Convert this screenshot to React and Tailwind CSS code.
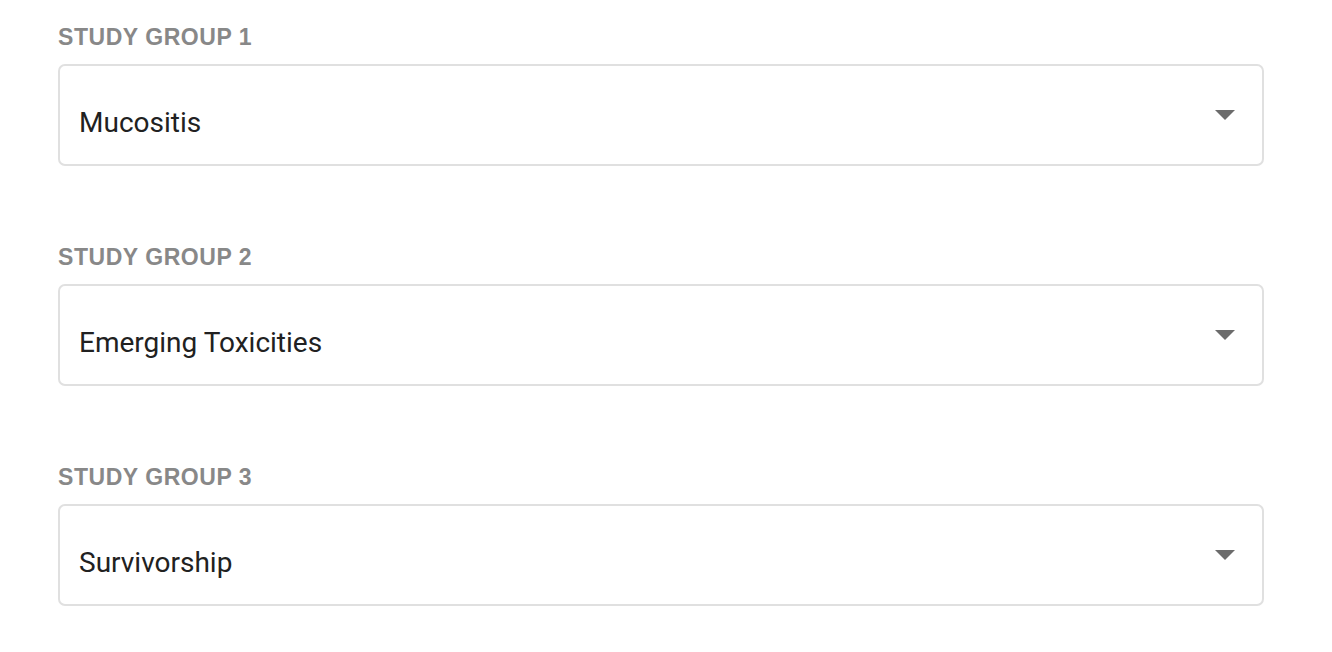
import React from "react";

const groups = [
  { label: "STUDY GROUP 1", value: "Mucositis" },
  { label: "STUDY GROUP 2", value: "Emerging Toxicities" },
  { label: "STUDY GROUP 3", value: "Survivorship" },
];

function Caret() {
  return (
    <svg width="20" height="10" viewBox="0 0 20 10" className="shrink-0">
      <path d="M0 0 L20 0 L10 10 Z" fill="#6b6b6b" />
    </svg>
  );
}

export default function App() {
  return (
    <div className="w-[1332px] h-[652px] bg-white pl-[58px] pr-[68px] pt-[24px]">
      <div className="flex flex-col gap-[78px]">
        {groups.map((g) => (
          <div key={g.label} className="flex flex-col">
            <div
              className="text-[23px] leading-[26px] font-bold tracking-[0.55px] text-[#888888] mb-[14px]"
              style={{ fontFamily: '"Liberation Sans", Arial, sans-serif' }}
            >
              {g.label}
            </div>
            <div className="h-[102px] border-2 border-[#e0e0e0] rounded-[7px] flex items-center pl-[19px] pr-[27px]">
              <div
                className="flex-1 pt-[16px] text-[28px] leading-[32px] text-[#212121]"
                style={{ fontFamily: 'Roboto, "Noto Sans", sans-serif' }}
              >
                {g.value}
              </div>
              <Caret />
            </div>
          </div>
        ))}
      </div>
    </div>
  );
}
